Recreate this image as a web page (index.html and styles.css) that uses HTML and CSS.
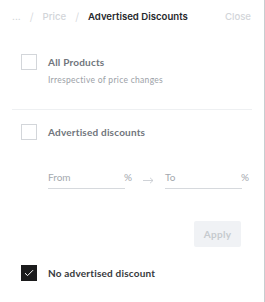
FILE: index.html
```html
<!DOCTYPE html>
<html lang="en">
<head>
    <meta charset="UTF-8">
    <meta name="viewport" content="width=device-width, initial-scale=1.0">
    <title>Advertised Discounts</title>
    <link rel="stylesheet" href="styles.css">
</head>
<body>
    <div class="panel">
        <div class="header">
            <div class="crumbs">
                <span class="crumb">...</span>
                <span class="sep">/</span>
                <span class="crumb">Price</span>
                <span class="sep">/</span>
                <span class="crumb current">Advertised Discounts</span>
            </div>
            <span class="close">Close</span>
        </div>

        <div class="option first">
            <span class="box"></span>
            <div class="option-text">
                <div class="label">All Products</div>
                <div class="hint">Irrespective of price changes</div>
            </div>
        </div>

        <div class="divider"></div>

        <div class="option second">
            <span class="box"></span>
            <div class="option-text">
                <div class="label">Advertised discounts</div>
            </div>
        </div>

        <div class="range">
            <div class="field">
                <span class="placeholder">From</span>
                <span class="unit">%</span>
            </div>
            <svg class="arrow" width="11" height="7" viewBox="0 0 11 7">
                <path d="M0 3.5H10M7 0.8L10 3.5L7 6.2" fill="none" stroke="#c9cdd2" stroke-width="0.9"/>
            </svg>
            <div class="field">
                <span class="placeholder">To</span>
                <span class="unit">%</span>
            </div>
        </div>

        <div class="actions">
            <button class="apply">Apply</button>
        </div>

        <div class="option last">
            <span class="box checked">
                <svg width="10" height="8" viewBox="0 0 10 8">
                    <path d="M1 4.2L3.6 6.6L9 1.2" fill="none" stroke="#fff" stroke-width="1"/>
                </svg>
            </span>
            <div class="option-text">
                <div class="label dark">No advertised discount</div>
            </div>
        </div>
    </div>
</body>
</html>
```

FILE: styles.css
```css
body {
    margin: 0;
    background-color: #fff;
    font-family: 'Lato', sans-serif;
}

.panel {
    width: 264px;
    height: 302px;
    border-right: 1px solid #c8cdd0;
    box-sizing: content-box;
}

.header {
    display: flex;
    align-items: center;
    justify-content: space-between;
    height: 33px;
    padding: 0 13px 0 12px;
    font-family: 'Inter', sans-serif;
    font-size: 9.6px;
}

.crumbs {
    display: flex;
    align-items: center;
}

.crumb {
    color: #d2d5d9;
    font-weight: 500;
}

.crumb.current {
    color: #26282b;
    font-weight: 600;
}

.sep {
    color: #d2d5d9;
    margin: 0 9px;
    font-weight: 300;
    font-size: 11px;
}

.close {
    color: #d2d5d9;
    font-weight: 500;
}

.option {
    display: flex;
    align-items: flex-start;
    padding-left: 21px;
}

.option.first {
    margin-top: 21px;
}

.option.second {
    margin-top: 14px;
}

.option.last {
    margin-top: 18px;
}

.box {
    width: 16px;
    height: 16px;
    border: 1px solid #d3d6da;
    box-sizing: border-box;
    flex-shrink: 0;
    display: flex;
    align-items: center;
    justify-content: center;
}

.box.checked {
    background-color: #1b1b1c;
    border-color: #1b1b1c;
}

.option-text {
    margin-left: 11px;
    padding-top: 2px;
}

.label {
    font-size: 10px;
    font-weight: 700;
    color: #70757c;
    letter-spacing: 0.2px;
    line-height: 12px;
}

.label.dark {
    color: #37393c;
}

.hint {
    margin-top: 7px;
    font-size: 8.5px;
    color: #9ca1a7;
    letter-spacing: 0.3px;
}

.divider {
    height: 1px;
    background-color: #eef0f2;
    margin: 24px 12px 0 12px;
}

.range {
    display: flex;
    align-items: center;
    margin: 31px 0 0 48px;
}

.field {
    width: 77px;
    display: flex;
    justify-content: space-between;
    padding-bottom: 5px;
    border-bottom: 1px solid #d6d9dd;
    font-size: 10px;
    color: #a4a9ae;
}

.unit {
    margin-right: -7px;
}

.arrow {
    margin: 0 11px 0 18px;
}

.actions {
    display: flex;
    justify-content: flex-end;
    padding-right: 23px;
    margin-top: 32px;
}

.apply {
    width: 47px;
    height: 26px;
    border: none;
    border-radius: 2px;
    background-color: #f0f2f5;
    color: #c6cace;
    font-family: 'Lato', sans-serif;
    font-size: 10px;
    font-weight: 700;
    letter-spacing: 0.3px;
    padding: 0;
}
```
